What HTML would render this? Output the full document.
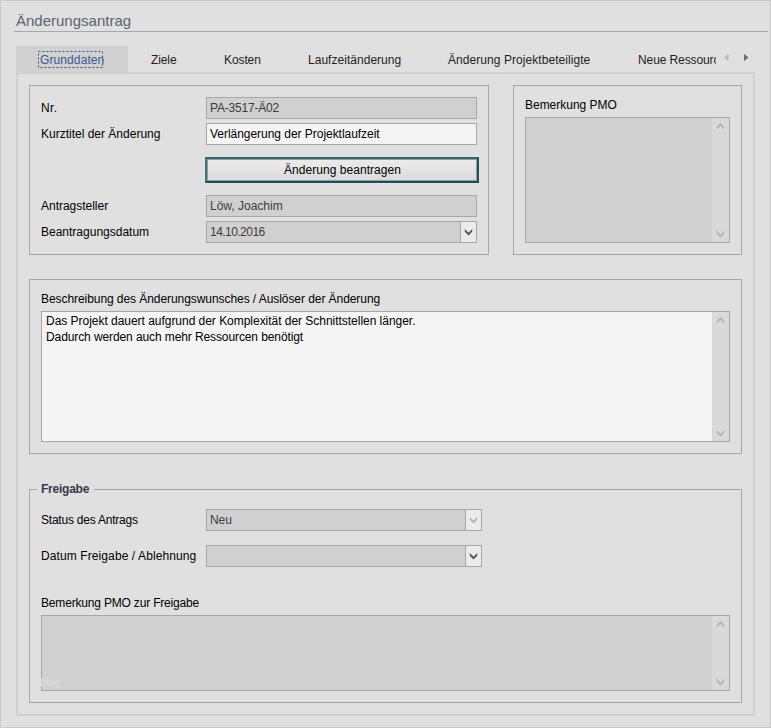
<!DOCTYPE html>
<html><head><meta charset="utf-8">
<style>
*{box-sizing:border-box;margin:0;padding:0}
html,body{width:771px;height:728px;overflow:hidden;background:#e0e0e0}
body{position:relative;font-family:"Liberation Sans",sans-serif;font-size:12px;color:#000}
.a{position:absolute}
.t{position:absolute;white-space:nowrap;line-height:15px;font-size:12px;letter-spacing:-0.1px}
.win{left:0;top:0;width:771px;height:728px;border:1px solid #cbcbcb}
.grp{position:absolute;border:1px solid #a6a6a6}
.fld{position:absolute;background:#d0d0d0;border:1px solid #a7a7a7}
.fld span{position:absolute;left:3px;top:3px;white-space:nowrap;line-height:15px;color:#3c3c3c;letter-spacing:-0.1px}
.dd{position:absolute;top:0;bottom:0;right:0;width:16px;background:#ebebeb;border-left:1px solid #a7a7a7}
.sb{position:absolute;top:0;bottom:0;right:0;width:17px;background:#d9d9d9}
svg{position:absolute;overflow:visible}
</style></head><body>
<div class="a win"></div>
<div class="t" style="left:16px;top:12px;font-size:15px;line-height:18px;color:#5c6370;letter-spacing:0">Änderungsantrag</div>
<div class="a" style="left:14px;top:31px;width:754px;height:1px;background:#a8a8a8"></div>

<!-- tab page -->
<div class="a" style="left:16px;top:72px;width:739px;height:644px;border:2px solid #d0d0d0"></div>
<!-- tabs -->
<div class="a" style="left:16px;top:46px;width:112px;height:28px;background:#d1d1d1"></div>
<svg style="left:0;top:0" width="120" height="80"><rect x="38.5" y="51.5" width="64" height="16" fill="none" stroke="#34507a" stroke-width="1" stroke-dasharray="2 2"/></svg>
<div class="t" style="left:40px;top:53px;color:#3b5a8e;letter-spacing:0.1px">Grunddaten</div>
<div class="t" style="left:151px;top:53px;color:#1e1e1e">Ziele</div>
<div class="t" style="left:224px;top:53px;color:#1e1e1e">Kosten</div>
<div class="t" style="left:308px;top:53px;color:#1e1e1e;letter-spacing:0.03px">Laufzeitänderung</div>
<div class="t" style="left:448px;top:53px;color:#1e1e1e;letter-spacing:0.06px">Änderung Projektbeteiligte</div>
<div class="t" style="left:638px;top:53px;width:78px;overflow:hidden;color:#1e1e1e">Neue Ressourcen</div>
<svg style="left:0;top:0" width="771" height="100"><path d="M728.5 54 L724 57.5 L728.5 61 Z" fill="#b9b9b9"/><path d="M744 54 L748.5 57.5 L744 61 Z" fill="#6a6a6a"/></svg>

<!-- group 1 -->
<div class="grp" style="left:29px;top:85px;width:460px;height:170px"></div>
<div class="t" style="left:41px;top:101px;letter-spacing:0.4px">Nr.</div>
<div class="t" style="left:41px;top:127px;letter-spacing:0px">Kurztitel der Änderung</div>
<div class="t" style="left:41px;top:199px;letter-spacing:-0.02px">Antragsteller</div>
<div class="t" style="left:41px;top:225px;letter-spacing:0px">Beantragungsdatum</div>
<div class="fld" style="left:206px;top:97px;width:271px;height:22px"><span style="letter-spacing:-0.2px">PA-3517-Ä02</span></div>
<div class="fld" style="left:206px;top:123px;width:271px;height:22px;background:#f4f4f4"><span style="color:#000;letter-spacing:-0.035px">Verlängerung der Projektlaufzeit</span></div>
<div class="a" style="left:204px;top:156px;width:276px;height:28px;border:1px solid #d3eaea"></div>
<div class="a" style="left:205px;top:157px;width:274px;height:26px;border:2px solid;border-color:#3f6264 #2f4b55 #2c4852 #4a6e6b;box-shadow:inset 0 0 0 1px #8aa3a3;background:linear-gradient(#ececec,#dadada)"></div>
<div class="t" style="left:205px;top:163px;width:275px;text-align:center;letter-spacing:0.05px">Änderung beantragen</div>
<div class="fld" style="left:206px;top:195px;width:271px;height:22px"><span style="letter-spacing:0">Löw, Joachim</span></div>
<div class="fld" style="left:206px;top:221px;width:271px;height:22px"><span style="letter-spacing:-0.54px">14.10.2016</span><div class="dd"></div></div>

<!-- group 2 -->
<div class="grp" style="left:513px;top:85px;width:229px;height:170px"></div>
<div class="t" style="left:525px;top:98px;letter-spacing:-0.02px">Bemerkung PMO</div>
<div class="fld" style="left:525px;top:117px;width:205px;height:126px"><div class="sb"></div></div>

<!-- group 3 -->
<div class="grp" style="left:29px;top:279px;width:713px;height:175px"></div>
<div class="t" style="left:41px;top:292px;letter-spacing:-0.065px">Beschreibung des Änderungswunsches / Auslöser der Änderung</div>
<div class="fld" style="left:41px;top:311px;width:689px;height:131px;background:#f4f4f4"><div class="sb"></div>
<div class="t" style="left:4px;top:2px;letter-spacing:-0.03px">Das Projekt dauert aufgrund der Komplexität der Schnittstellen länger.</div>
<div class="t" style="left:4px;top:18px">Dadurch werden auch mehr Ressourcen benötigt</div>
</div>

<!-- group 4 -->
<div class="grp" style="left:29px;top:489px;width:713px;height:214px"></div>
<div class="a" style="left:37px;top:485px;width:57px;height:8px;background:#e0e0e0"></div>
<div class="t" style="left:41px;top:482px;font-weight:bold;color:#383848;letter-spacing:-0.24px">Freigabe</div>
<div class="t" style="left:41px;top:513px;letter-spacing:-0.22px">Status des Antrags</div>
<div class="t" style="left:41px;top:549px;letter-spacing:0.1px">Datum Freigabe / Ablehnung</div>
<div class="fld" style="left:206px;top:509px;width:276px;height:22px"><span>Neu</span><div class="dd"></div></div>
<div class="fld" style="left:206px;top:545px;width:276px;height:22px"><div class="dd"></div></div>
<div class="t" style="left:41px;top:596px;letter-spacing:-0.18px">Bemerkung PMO zur Freigabe</div>
<div class="fld" style="left:41px;top:615px;width:689px;height:76px"><div class="sb"></div></div>
<svg style="left:0;top:0" width="771" height="728">
<g fill="#555555">
<path d="M464.8 229 L468.5 232.7 L472.2 229 L472.2 231.7 L468.5 235.4 L464.8 231.7 Z"/>
<path d="M469.8 553 L473.5 556.7 L477.2 553 L477.2 555.7 L473.5 559.4 L469.8 555.7 Z"/>
</g>
<g fill="#b4b4b4">
<path d="M469.8 517 L473.5 520.7 L477.2 517 L477.2 519.7 L473.5 523.4 L469.8 519.7 Z"/>
<path d="M716.8 126.7 L720.5 123 L724.2 126.7 L724.2 129.4 L720.5 125.7 L716.8 129.4 Z"/>
<path d="M716.8 231 L720.5 234.7 L724.2 231 L724.2 233.7 L720.5 237.4 L716.8 233.7 Z"/>
<path d="M716.8 320.7 L720.5 317 L724.2 320.7 L724.2 323.4 L720.5 319.7 L716.8 323.4 Z"/>
<path d="M716.8 430 L720.5 433.7 L724.2 430 L724.2 432.7 L720.5 436.4 L716.8 432.7 Z"/>
<path d="M716.8 624.7 L720.5 621 L724.2 624.7 L724.2 627.4 L720.5 623.7 L716.8 627.4 Z"/>
<path d="M716.8 679 L720.5 682.7 L724.2 679 L724.2 681.7 L720.5 685.4 L716.8 681.7 Z"/>
</g>
</svg>
<div class="t" style="left:40px;top:675px;font-size:10.5px;color:#dfdfdf;letter-spacing:0">blog</div>
</body></html>
